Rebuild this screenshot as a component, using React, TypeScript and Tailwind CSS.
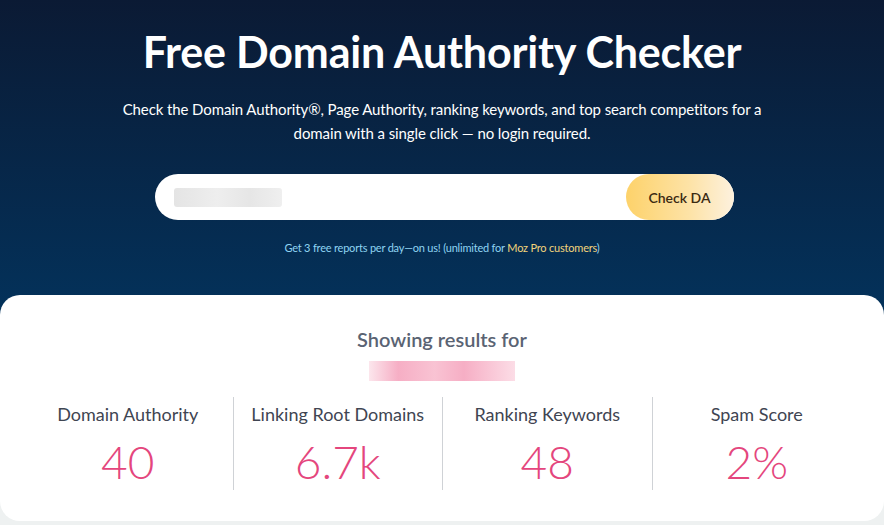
import React from "react";

const metrics = [
  { label: "Domain Authority", value: "40" },
  { label: "Linking Root Domains", value: "6.7k" },
  { label: "Ranking Keywords", value: "48" },
  { label: "Spam Score", value: "2%" },
];

export default function App() {
  return (
    <div className="w-[884px] h-[525px] overflow-hidden bg-[#eef1f1] font-['Lato',sans-serif]">
      <div className="bg-[linear-gradient(180deg,#0b1a34_0%,#03325b_100%)] pt-[26px] pb-[60px] flex flex-col items-center">
        <h1 className="text-white font-bold text-[43px] leading-[52px] tracking-[-0.2px]">
          Free Domain Authority Checker
        </h1>
        <p className="mt-[19px] text-white text-[15px] leading-[24px] text-center w-[660px] tracking-[-0.1px]">
          Check the Domain Authority®, Page Authority, ranking keywords, and top search competitors for a domain with a single click — no login required.
        </p>
        <div className="mt-[29px] ml-[4px] w-[579px] h-[46px] bg-white rounded-full flex items-center justify-between pl-[19px]">
          <div className="w-[108px] h-[19px] rounded-[3px] bg-[linear-gradient(90deg,#e4e4e4,#eeeeee_40%,#e6e6e6_70%,#efefef)]" />
          <button className="h-[46px] w-[108px] rounded-full bg-[linear-gradient(90deg,#fdd26a_0%,#fde3a8_60%,#fdf1de_100%)] text-[#3b2a12] text-[14px] font-semibold">
            Check DA
          </button>
        </div>
        <p className="mt-[21px] text-[11px] leading-[14px] text-[#8fd4f2] tracking-[-0.2px]">
          Get 3 free reports per day—on us! (unlimited for <span className="text-[#f2d47b]">Moz Pro customers</span>)
        </p>
      </div>
      <div className="-mt-[20px] h-[226px] bg-white rounded-[20px] flex flex-col items-center pt-[30px]">
        <h2 className="text-[#5a6373] text-[20px] leading-[28px] font-semibold">Showing results for</h2>
        <div className="mt-[8px] w-[146px] h-[20px] bg-[linear-gradient(90deg,#fbe0e8,#f49ab6_20%,#f7b4c8_45%,#f49ab6_65%,#fbd4e0_100%)] opacity-80" />
        <div className="mt-[16px] w-full px-[23px] grid grid-cols-4">
          {metrics.map((m, i) => (
            <div
              key={m.label}
              className={
                "flex flex-col items-center h-[93px] " +
                (i > 0 ? "border-l border-[#cfd2d6]" : "")
              }
            >
              <div className="mt-[5px] text-[#3f4552] text-[18px] leading-[24px]">{m.label}</div>
              <div className="mt-[10px] text-[#e4467d] text-[46px] leading-[52px] font-light">{m.value}</div>
            </div>
          ))}
        </div>
      </div>
    </div>
  );
}
